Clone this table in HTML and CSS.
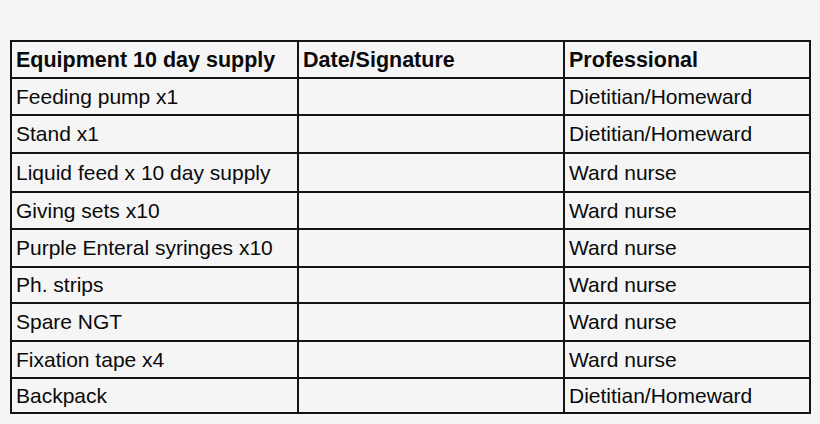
FILE: index.html
```html
<!DOCTYPE html>
<html>
<head>
<meta charset="utf-8">
<link rel="stylesheet" href="styles.css">
</head>
<body>
<table class="supply">
  <colgroup>
    <col class="c1"><col class="c2"><col class="c3">
  </colgroup>
  <thead>
    <tr class="r37"><th>Equipment 10 day supply</th><th>Date/Signature</th><th>Professional</th></tr>
  </thead>
  <tbody>
    <tr class="r37"><td>Feeding pump x1</td><td></td><td>Dietitian/Homeward</td></tr>
    <tr class="r38"><td>Stand x1</td><td></td><td>Dietitian/Homeward</td></tr>
    <tr class="r39"><td>Liquid feed x 10 day supply</td><td></td><td>Ward nurse</td></tr>
    <tr class="r37"><td>Giving sets x10</td><td></td><td>Ward nurse</td></tr>
    <tr class="r38"><td>Purple Enteral syringes x10</td><td></td><td>Ward nurse</td></tr>
    <tr class="r36"><td>Ph. strips</td><td></td><td>Ward nurse</td></tr>
    <tr class="r38"><td>Spare NGT</td><td></td><td>Ward nurse</td></tr>
    <tr class="r37"><td>Fixation tape x4</td><td></td><td>Ward nurse</td></tr>
    <tr class="r35"><td>Backpack</td><td></td><td>Dietitian/Homeward</td></tr>
  </tbody>
</table>
</body>
</html>
```
FILE: styles.css
```css
html, body {
  margin: 0;
  padding: 0;
  background: #f5f5f5;
}
body {
  padding: 40px 10px 0 10px;
  font-family: "Liberation Sans", Arial, sans-serif;
  color: #0a0a0a;
}
.supply {
  border-collapse: collapse;
  table-layout: fixed;
  width: 799px;
  font-size: 21px;
  line-height: 24px;
}
.c1 { width: 287px; }
.c2 { width: 266px; }
.c3 { width: 246px; }
.supply th,
.supply td {
  border: 2px solid #141414;
  padding: 0 4px;
  text-align: left;
  vertical-align: middle;
  white-space: nowrap;
}
.supply th {
  font-weight: bold;
  font-size: 21.5px;
}
.r35 { height: 35px; }
.r36 { height: 36px; }
.r37 { height: 37px; }
.r38 { height: 38px; }
.r39 { height: 39px; }
```
